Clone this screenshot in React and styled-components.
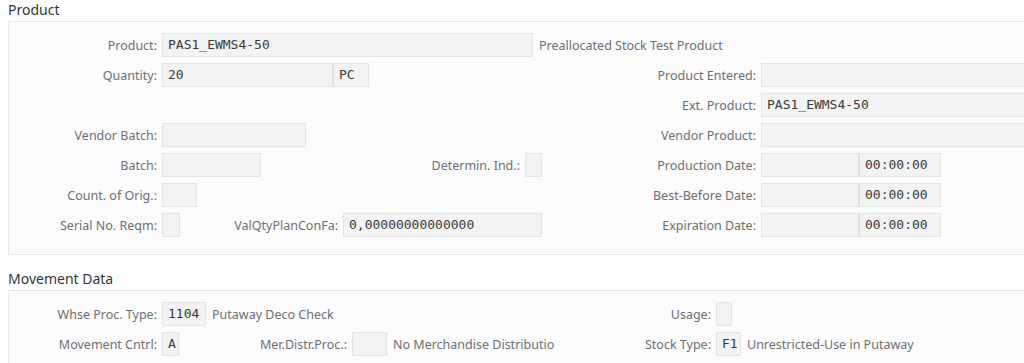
import styled, { createGlobalStyle } from "styled-components";

const GlobalStyle = createGlobalStyle`
  html, body {
    margin: 0;
    padding: 0;
    overflow: hidden;
    background: #ffffff;
  }
  body {
    font-family: "Noto Sans", "Liberation Sans", sans-serif;
  }
`;

const Page = styled.div`
  width: 1024px;
  height: 363px;
  overflow: hidden;
`;

const SectionTitle = styled.div`
  height: 21px;
  line-height: 20px;
  padding-left: 8px;
  font-size: 14px;
  color: #32363a;
  margin-top: ${(p) => p.$top || 0}px;
`;

const Panel = styled.div`
  margin-left: 8px;
  margin-right: -60px;
  border: 1px solid #e8e8e8;
  background: #fcfcfc;
  padding: 8px 0 ${(p) => p.$bottom || 0}px 0;
`;

const Row = styled.div`
  display: flex;
  align-items: center;
  height: 30px;
`;

const Label = styled.div`
  flex: none;
  width: ${(p) => p.$w}px;
  box-sizing: border-box;
  padding-right: 5px;
  text-align: right;
  font-size: 12.5px;
  color: #6d6f72;
  white-space: nowrap;
`;

const Field = styled.div`
  flex: none;
  width: ${(p) => p.$w}px;
  height: 24px;
  box-sizing: border-box;
  border: 1px solid #e4e4e4;
  background: #f3f3f3;
  padding-left: 5px;
  font-family: "DejaVu Sans Mono", "Liberation Mono", monospace;
  font-size: 13px;
  line-height: 22px;
  color: #3a3a3a;
  white-space: nowrap;
  overflow: hidden;
  & + & {
    border-left: 1px solid #dedede;
  }
`;

const Desc = styled.div`
  flex: none;
  width: ${(p) => (p.$w ? `${p.$w}px` : "auto")};
  box-sizing: border-box;
  padding-left: 6px;
  font-size: 12.5px;
  color: #6d6f72;
  white-space: nowrap;
  overflow: hidden;
`;

const WIDE = 320;

const DateTime = () => (
  <>
    <Field $w={98} />
    <Field $w={82}>00:00:00</Field>
  </>
);

export default function App() {
  return (
    <Page>
      <GlobalStyle />
      <SectionTitle>Product</SectionTitle>
      <Panel $bottom={14}>
        <Row>
          <Label $w={153}>Product:</Label>
          <Field $w={371}>PAS1_EWMS4-50</Field>
          <Desc>Preallocated Stock Test Product</Desc>
        </Row>
        <Row>
          <Label $w={153}>Quantity:</Label>
          <Field $w={171}>20</Field>
          <Field $w={36}>PC</Field>
          <Label $w={392}>Product Entered:</Label>
          <Field $w={WIDE} />
        </Row>
        <Row>
          <Label $w={752}>Ext. Product:</Label>
          <Field $w={WIDE}>PAS1_EWMS4-50</Field>
        </Row>
        <Row>
          <Label $w={153}>Vendor Batch:</Label>
          <Field $w={144} />
          <Label $w={455}>Vendor Product:</Label>
          <Field $w={WIDE} />
        </Row>
        <Row>
          <Label $w={153}>Batch:</Label>
          <Field $w={99} />
          <Label $w={264}>Determin. Ind.:</Label>
          <Field $w={17} />
          <Label $w={219}>Production Date:</Label>
          <DateTime />
        </Row>
        <Row>
          <Label $w={153}>Count. of Orig.:</Label>
          <Field $w={35} />
          <Label $w={564}>Best-Before Date:</Label>
          <DateTime />
        </Row>
        <Row>
          <Label $w={153}>Serial No. Reqm:</Label>
          <Field $w={18} />
          <Label $w={163}>ValQtyPlanConFa:</Label>
          <Field $w={199}>0,00000000000000</Field>
          <Label $w={219}>Expiration Date:</Label>
          <DateTime />
        </Row>
      </Panel>

      <SectionTitle $top={14}>Movement Data</SectionTitle>
      <Panel $bottom={10}>
        <Row>
          <Label $w={153}>Whse Proc. Type:</Label>
          <Field $w={44}>1104</Field>
          <Desc $w={300}>Putaway Deco Check</Desc>
          <Label $w={210}>Usage:</Label>
          <Field $w={16} />
        </Row>
        <Row>
          <Label $w={153}>Movement Cntrl:</Label>
          <Field $w={17}>A</Field>
          <Label $w={173}>Mer.Distr.Proc.:</Label>
          <Field $w={35} />
          <Desc $w={200}>No Merchandise Distributio</Desc>
          <Label $w={129}>Stock Type:</Label>
          <Field $w={25}>F1</Field>
          <Desc>Unrestricted-Use in Putaway</Desc>
        </Row>
      </Panel>
    </Page>
  );
}
